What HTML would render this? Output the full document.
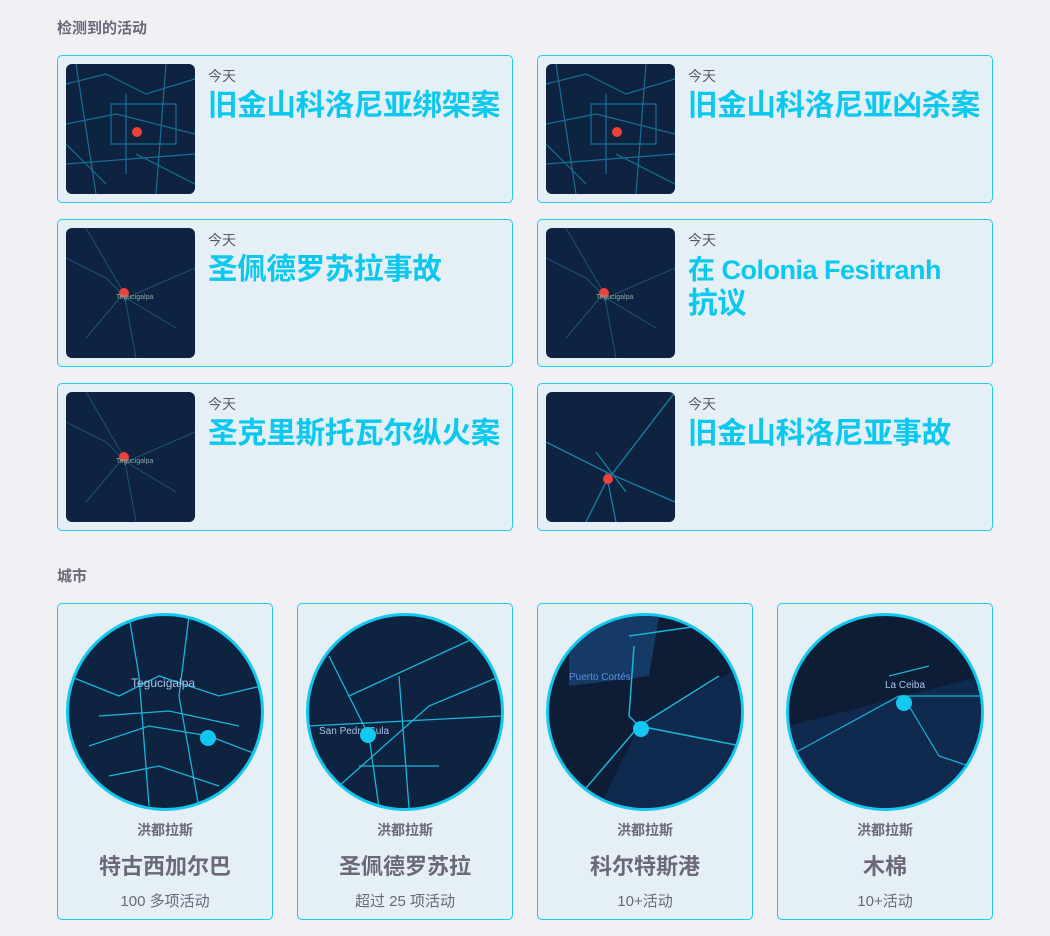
<!DOCTYPE html>
<html><head><meta charset="utf-8"><style>
*{margin:0;padding:0;box-sizing:border-box}
body{width:1050px;height:936px;background:#f1f1f5;font-family:"Liberation Sans","Noto Sans CJK SC",sans-serif;position:relative;overflow:hidden;color:#6b6878}
.h{position:absolute;left:57px;font-size:15px;font-weight:bold;color:#6b6878}
.c{position:absolute;width:456px;height:148px;background:#e4eff6;border:1px solid #1ccdee;border-radius:5px}
.m{position:absolute;left:8px;top:8px;width:129px;height:130px;border-radius:6px;background:#0d2340;overflow:hidden}
.t{position:absolute;left:150px;top:10px;font-size:14px;color:#5d5a6a}
.ti{position:absolute;left:150px;top:33px;font-size:29.5px;font-weight:bold;color:#0bc8ee;line-height:34px;white-space:nowrap;letter-spacing:-0.3px}
.k{position:absolute;top:603px;width:216px;height:317px;background:#e4eff6;border:1px solid #1ccdee;border-radius:5px;text-align:center}
.ci{position:absolute;left:8px;top:9px;width:198px;height:198px;border-radius:50%;border:3px solid #12c8f0;background:#0d2340;overflow:hidden}
.a{position:absolute;left:0;right:0;top:216px;font-size:14px;font-weight:bold}
.n{position:absolute;left:0;right:0;top:245px;font-size:22px;font-weight:bold}
.q{position:absolute;left:0;right:0;top:286px;font-size:15px}
.dot{position:absolute;width:10px;height:10px;border-radius:50%;background:#f0403a}
.bd{position:absolute;width:16px;height:16px;border-radius:50%;background:#12c8f0}
svg{position:absolute;left:0;top:0}
</style></head><body>
<div class="h" style="top:17px">检测到的活动</div>

<div class="c" style="left:57px;top:55px"><div class="m"><svg width="129" height="130" stroke="#1a6f95" fill="none" stroke-width="1.2"><path d="M0 20 L40 10 L80 30 L129 15 M0 60 L50 50 L129 70 M10 0 L30 130 M60 30 L60 110 M100 0 L90 130 M0 100 L129 90 M45 40 L110 40 L110 80 L45 80Z M0 80 L40 120 M70 90 L129 120"/></svg><div class="dot" style="left:66px;top:63px"></div></div><div class="t">今天</div><div class="ti">旧金山科洛尼亚绑架案</div></div>
<div class="c" style="left:537px;top:55px"><div class="m"><svg width="129" height="130" stroke="#1a6f95" fill="none" stroke-width="1.2"><path d="M0 20 L40 10 L80 30 L129 15 M0 60 L50 50 L129 70 M10 0 L30 130 M60 30 L60 110 M100 0 L90 130 M0 100 L129 90 M45 40 L110 40 L110 80 L45 80Z M0 80 L40 120 M70 90 L129 120"/></svg><div class="dot" style="left:66px;top:63px"></div></div><div class="t">今天</div><div class="ti">旧金山科洛尼亚凶杀案</div></div>

<div class="c" style="left:57px;top:219px"><div class="m"><svg width="129" height="130" stroke="#1d5478" fill="none"><path d="M0 30 L40 50 L60 70 L129 40 M20 0 L58 65 L70 130 M58 65 L20 110 M60 70 L110 100"/></svg><div class="dot" style="left:53px;top:60px"></div><span style="position:absolute;left:50px;top:66px;font-size:7px;color:#8aa">Tegucigalpa</span></div><div class="t">今天</div><div class="ti">圣佩德罗苏拉事故</div></div>
<div class="c" style="left:537px;top:219px"><div class="m"><svg width="129" height="130" stroke="#1d5478" fill="none"><path d="M0 30 L40 50 L60 70 L129 40 M20 0 L58 65 L70 130 M58 65 L20 110 M60 70 L110 100"/></svg><div class="dot" style="left:53px;top:60px"></div><span style="position:absolute;left:50px;top:66px;font-size:7px;color:#8aa">Tegucigalpa</span></div><div class="t">今天</div><div class="ti"><span style="font-size:27px;letter-spacing:-0.5px">在 Colonia Fesitranh</span><br>抗议</div></div>

<div class="c" style="left:57px;top:383px"><div class="m"><svg width="129" height="130" stroke="#1d5478" fill="none"><path d="M0 30 L40 50 L60 70 L129 40 M20 0 L58 65 L70 130 M58 65 L20 110 M60 70 L110 100"/></svg><div class="dot" style="left:53px;top:60px"></div><span style="position:absolute;left:50px;top:66px;font-size:7px;color:#8aa">Tegucigalpa</span></div><div class="t">今天</div><div class="ti">圣克里斯托瓦尔纵火案</div></div>
<div class="c" style="left:537px;top:383px"><div class="m"><svg width="129" height="130" stroke="#1a7fa5" fill="none" stroke-width="1.3"><path d="M129 0 L60 90 L40 130 M0 50 L60 80 L129 110 M60 80 L70 130 M50 60 L80 100"/></svg><div class="dot" style="left:57px;top:82px"></div></div><div class="t">今天</div><div class="ti">旧金山科洛尼亚事故</div></div>

<div class="h" style="top:565px">城市</div>

<div class="k" style="left:57px"><div class="ci"><svg width="192" height="192" stroke="#1ab5d8" fill="none" stroke-width="1.3"><path d="M0 60 L50 80 L90 60 L150 80 L192 70 M20 130 L80 110 L140 120 L192 140 M60 0 L70 60 L80 190 M120 0 L110 80 L130 192 M30 100 L100 95 L170 110 M40 160 L90 150 L150 170"/></svg><span style="position:absolute;left:62px;top:60px;font-size:12px;color:#a8c4ee">Tegucigalpa</span><div class="bd" style="left:131px;top:114px"></div></div><div class="a">洪都拉斯</div><div class="n">特古西加尔巴</div><div class="q">100 多项活动</div></div>
<div class="k" style="left:297px"><div class="ci"><svg width="192" height="192" stroke="#1ab5d8" fill="none" stroke-width="1.3"><path d="M20 40 L60 120 L70 192 M0 110 L192 100 M40 80 L170 20 M50 150 L130 150 M90 60 L100 192 M30 170 L120 90 L192 60"/></svg><span style="position:absolute;left:10px;top:110px;font-size:10px;color:#a8c4ee">San Pedro Sula</span><div class="bd" style="left:51px;top:111px"></div></div><div class="a">洪都拉斯</div><div class="n">圣佩德罗苏拉</div><div class="q">超过 25 项活动</div></div>
<div class="k" style="left:537px"><div class="ci" style="background:#0c1d35"><svg width="192" height="192" fill="none"><path d="M20 0 L110 0 L100 60 L20 70Z" fill="#163a66"/><path d="M90 110 L192 50 L192 192 L50 192Z" fill="#0f2a4e"/><g stroke="#1ab5d8" stroke-width="1.5"><path d="M85 30 L80 100 L90 110 L192 130 M90 110 L20 192 M90 110 L170 60 M80 20 L150 10"/></g></svg><span style="position:absolute;left:20px;top:56px;font-size:10px;color:#5e8de0">Puerto Cortés</span><div class="bd" style="left:84px;top:105px"></div></div><div class="a">洪都拉斯</div><div class="n">科尔特斯港</div><div class="q">10+活动</div></div>
<div class="k" style="left:777px"><div class="ci" style="background:#0c1d35"><svg width="192" height="192" fill="none"><path d="M0 110 L192 60 L192 192 L0 192Z" fill="#0f2a4e"/><g stroke="#1ab5d8" stroke-width="1.2"><path d="M0 140 L110 80 L192 80 M120 90 L150 140 L180 150 M100 60 L140 50"/></g></svg><span style="position:absolute;left:96px;top:64px;font-size:10px;color:#a8c4ee">La Ceiba</span><div class="bd" style="left:107px;top:79px"></div></div><div class="a">洪都拉斯</div><div class="n">木棉</div><div class="q">10+活动</div></div>
</body></html>
